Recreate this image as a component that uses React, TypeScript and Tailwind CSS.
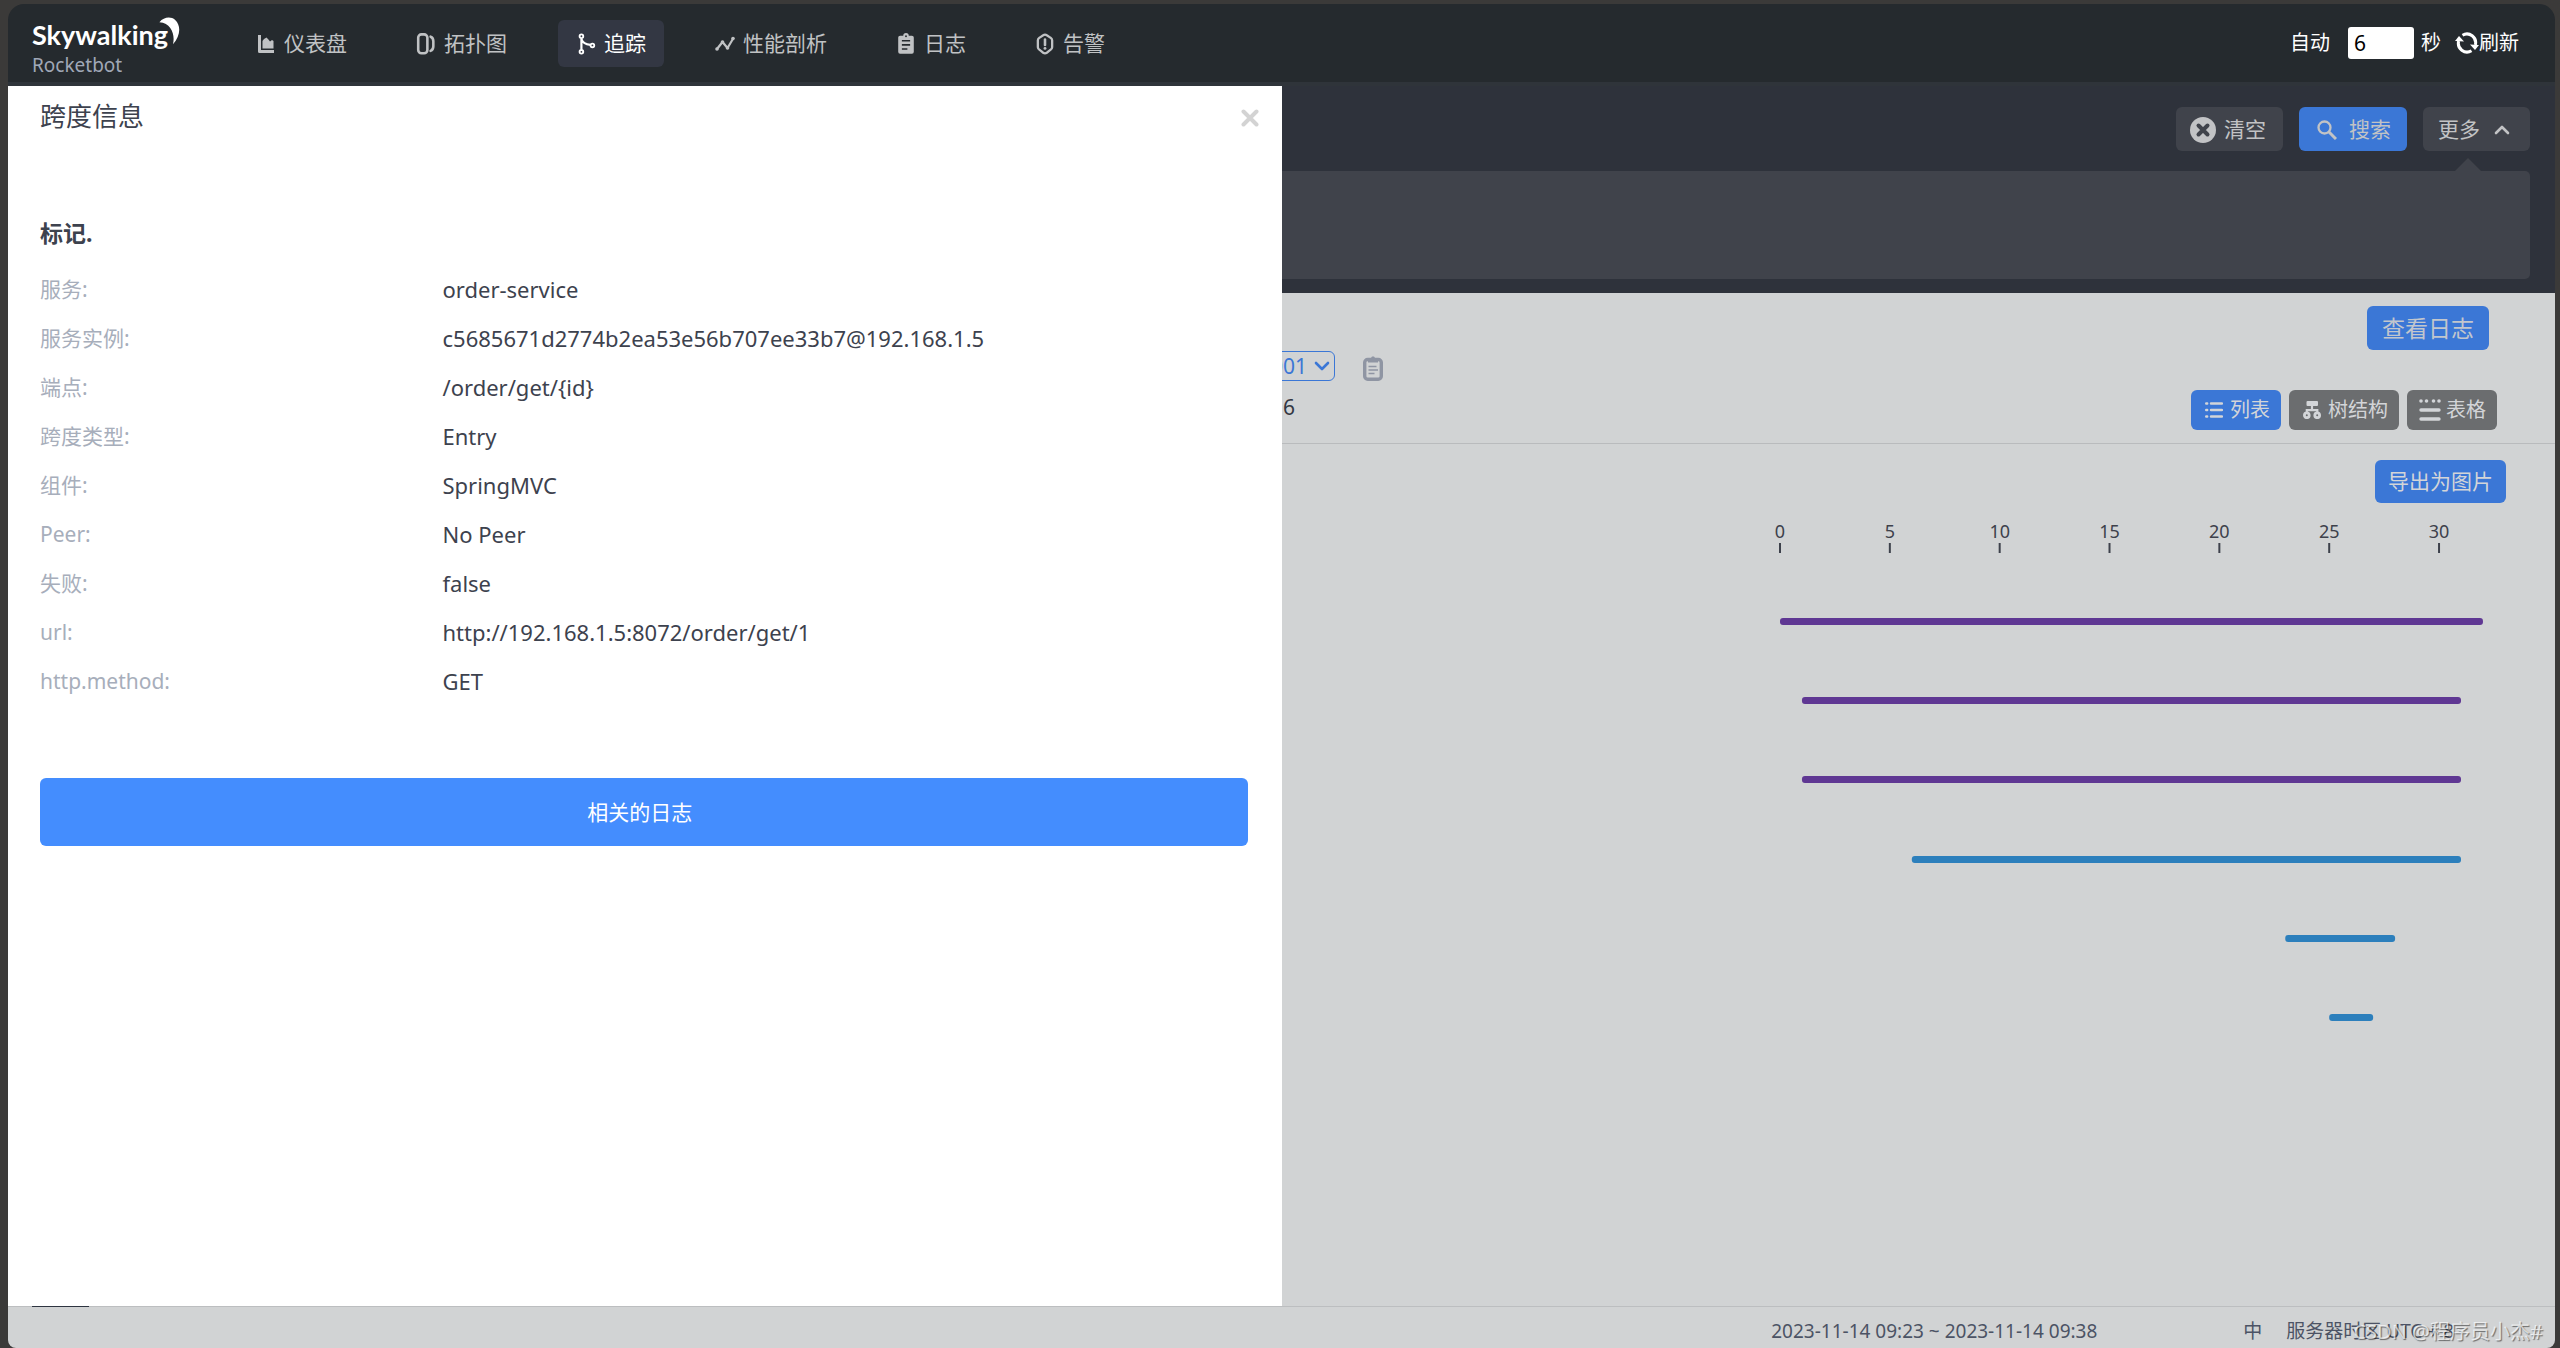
import type { ReactNode } from "react";

type IconProps = { className?: string };

const ChartIcon = ({ className }: IconProps) => (
  <svg viewBox="0 0 18 22" className={className} fill="currentColor" aria-hidden="true">
    <path d="M1 2h3v15h13v3H2.500Q1 20 1 18.500z" />
    <path d="M5.500 15.500V8l1.500-2 2.500-1.500L11 6l2 2.500 2-1.500 1.500 1v7.500z" />
  </svg>
);

const TopologyIcon = ({ className }: IconProps) => (
  <svg viewBox="0 0 20 24" className={className} fill="none" stroke="currentColor" aria-hidden="true">
    <rect x="1.500" y="1.500" width="10" height="20.500" rx="3.500" strokeWidth="2.800" />
    <path d="M15 4q3 1 3 5v5.500q0 4-3 5" strokeWidth="2.800" strokeLinecap="round" />
  </svg>
);

const TraceIcon = ({ className }: IconProps) => (
  <svg viewBox="0 0 20 24" className={className} fill="none" stroke="currentColor" strokeWidth="2" aria-hidden="true">
    <circle cx="5" cy="3.500" r="2" />
    <circle cx="5" cy="20.500" r="2" />
    <circle cx="17" cy="13.500" r="2" />
    <path d="M5 6v12M5 6.500q1.500 5.500 10 6.500" strokeWidth="2.400" />
  </svg>
);

const TrendIcon = ({ className }: IconProps) => (
  <svg viewBox="0 0 20 22" className={className} fill="none" stroke="currentColor" aria-hidden="true">
    <path d="M2 16 7.500 9l5 6 6-10" strokeWidth="2.200" strokeLinejoin="round" />
    <g fill="currentColor" stroke="none">
      <circle cx="2" cy="16" r="1.800" />
      <circle cx="7.500" cy="9" r="1.800" />
      <circle cx="12.500" cy="15" r="1.800" />
      <circle cx="18" cy="5.500" r="1.800" />
    </g>
  </svg>
);

const LogIcon = ({ className }: IconProps) => (
  <svg viewBox="0 0 20 24" className={className} aria-hidden="true">
    <path d="M3.500 3H7a3 3 0 0 1 6 0h3.500Q18.500 3 18.500 5v15.500q0 2-2 2h-13q-2 0-2-2V5q0-2 2-2z" fill="currentColor" />
    <path d="M5.500 8.500h9M5.500 13h9M5.500 17.500h6" stroke="#252a2e" strokeWidth="1.800" />
    <circle cx="10" cy="3.500" r="1" fill="#252a2e" />
  </svg>
);

const AlarmIcon = ({ className }: IconProps) => (
  <svg viewBox="0 0 20 24" className={className} fill="none" stroke="currentColor" aria-hidden="true">
    <path d="M10 1.800q1 0 2 .7l3.800 2.500q2 1.200 2 3v7.500q0 1.800-2 3L12 21.500q-2 1.300-4 0l-3.800-3q-2-1.200-2-3V8q0-1.800 2-3L8 2.500q1-.7 2-.7z" strokeWidth="2.500" />
    <path d="M10 7v6" strokeWidth="2.800" strokeLinecap="round" />
    <circle cx="10" cy="16.800" r="1.600" fill="currentColor" stroke="none" />
  </svg>
);

const RefreshIcon = ({ className }: IconProps) => (
  <svg viewBox="0 0 24 22" className={className} aria-hidden="true">
    <g fill="none" stroke="currentColor" strokeWidth="3">
      <path d="M7.500 3.200A8.700 8.700 0 0 1 20.300 13" />
      <path d="M16.500 18.800A8.700 8.700 0 0 1 3.700 9" />
    </g>
    <path d="M0 9 4 4l5 5.500z" fill="currentColor" />
    <path d="M24 13 20 18l-5-5.500z" fill="currentColor" />
  </svg>
);

const ClearIcon = ({ className }: IconProps) => (
  <svg viewBox="0 0 26 26" className={className} aria-hidden="true">
    <circle cx="13" cy="13" r="13" fill="currentColor" />
    <path d="M8.500 8.500l9 9M17.500 8.500l-9 9" stroke="#40434b" strokeWidth="4" strokeLinecap="round" />
  </svg>
);

const SearchIcon = ({ className }: IconProps) => (
  <svg viewBox="0 0 20 20" className={className} fill="none" stroke="currentColor" strokeWidth="2.300" aria-hidden="true">
    <circle cx="7.500" cy="7.500" r="6" />
    <path d="M12 12l7 7" strokeWidth="3" />
  </svg>
);

const Chevron = ({ className }: IconProps) => (
  <svg viewBox="0 0 16 10" className={className} fill="none" stroke="currentColor" strokeWidth="2.600" strokeLinecap="round" strokeLinejoin="round" aria-hidden="true">
    <path d="M2 2l6 6 6-6" />
  </svg>
);

const ClipboardIcon = ({ className }: IconProps) => (
  <svg viewBox="0 0 20 25" className={className} fill="none" stroke="currentColor" aria-hidden="true">
    <rect x="1.700" y="3.500" width="16.600" height="19.800" rx="3" strokeWidth="3.400" />
    <path d="M5 2h3l1-1.500h2L12 2h3v4.500H5z" fill="currentColor" stroke="none" />
    <path d="M5.500 10.500h8M5.500 14h9.500M5.500 17.500h6" strokeWidth="1.600" />
  </svg>
);

const ListIcon = ({ className }: IconProps) => (
  <svg viewBox="0 0 18 18" className={className} stroke="currentColor" strokeWidth="2.400" aria-hidden="true">
    <path d="M1.200 2.500h1M1.200 9h1M1.200 15.500h1M6 2.500h11M6 9h11M6 15.500h11" strokeLinecap="round" />
  </svg>
);

const TreeIcon = ({ className }: IconProps) => (
  <svg viewBox="0 0 18 18" className={className} fill="none" stroke="currentColor" strokeWidth="2.200" aria-hidden="true">
    <rect x="3.500" y="0" width="11.500" height="5" rx="1" fill="currentColor" stroke="none" />
    <path d="M9 4v5M3.800 13V9.200h10.500V13" />
    <circle cx="3.800" cy="14.300" r="2.400" strokeWidth="2.800" />
    <circle cx="14.200" cy="14.300" r="2.400" strokeWidth="2.800" />
  </svg>
);

const TableIcon = ({ className }: IconProps) => (
  <svg viewBox="0 0 22 22" className={className} aria-hidden="true">
    <path d="M2 11h18M2 20h18" stroke="currentColor" strokeWidth="3.400" strokeLinecap="round" />
    <g fill="currentColor">
      <circle cx="2" cy="2" r="1.800" />
      <circle cx="7.500" cy="2" r="1.800" />
      <circle cx="14.500" cy="2" r="1.800" />
      <circle cx="20" cy="2" r="1.800" />
    </g>
  </svg>
);

const navItems: { label: string; Icon: (p: IconProps) => ReactNode; active?: boolean }[] = [
  { label: "仪表盘", Icon: ChartIcon },
  { label: "拓扑图", Icon: TopologyIcon },
  { label: "追踪", Icon: TraceIcon, active: true },
  { label: "性能剖析", Icon: TrendIcon },
  { label: "日志", Icon: LogIcon },
  { label: "告警", Icon: AlarmIcon },
];

const spanFields = [
  ["服务:", "order-service"],
  ["服务实例:", "c5685671d2774b2ea53e56b707ee33b7@192.168.1.5"],
  ["端点:", "/order/get/{id}"],
  ["跨度类型:", "Entry"],
  ["组件:", "SpringMVC"],
  ["Peer:", "No Peer"],
  ["失败:", "false"],
  ["url:", "http://192.168.1.5:8072/order/get/1"],
  ["http.method:", "GET"],
];

const PURPLE = "#5f3793";
const BLUE = "#2c7fbc";
const MAX = 32;
const spans = [
  { start: 0, end: 32, y: 115, color: PURPLE },
  { start: 1, end: 31, y: 194, color: PURPLE },
  { start: 1, end: 31, y: 273, color: PURPLE },
  { start: 6, end: 31, y: 353, color: BLUE },
  { start: 23, end: 28, y: 432, color: BLUE },
  { start: 25, end: 27, y: 511, color: BLUE },
];
const ticks = [0, 5, 10, 15, 20, 25, 30];
const pct = (v: number) => `${(v / MAX) * 100}%`;

function Header() {
  return (
    <header className="flex h-[78px] items-center rounded-t-2xl bg-[#252a2e] pl-6 pr-9 text-white">
      <div className="flex w-[206px] flex-col pt-2">
        <div className="flex items-start">
          <span className="text-[27px] leading-9 font-bold font-['Lato',sans-serif]">Skywalking</span>
          <svg viewBox="0 0 23 32" className="-ml-2.5 h-7 w-[23px]" fill="#fff" aria-hidden="true">
            <path d="M0 6C5 0 13-1 18 3.500 25 10 24 22 15.500 31 18 21 14 7 0 6z" />
          </svg>
        </div>
        <span className="text-[19px] leading-6 text-[#a0a8b7]">Rocketbot</span>
      </div>
      <nav className="flex gap-[33px]">
        {navItems.map(({ label, Icon, active }) => (
          <a
            key={label}
            href="#"
            className={
              active
                ? "flex h-[47px] items-center gap-2 rounded-md bg-[#333743] px-[18px] pt-0.5 text-[21px] text-white"
                : "flex h-[47px] items-center gap-2 px-[18px] pt-0.5 text-[21px] text-[#c0c2c4]"
            }
          >
            <Icon className="h-[22px] w-5" />
            {label}
          </a>
        ))}
      </nav>
      <div className="ml-auto flex items-center text-[20px]">
        <label htmlFor="interval">自动</label>
        <input id="interval" defaultValue="6" className="ml-[18px] h-8 w-[66px] rounded-[3px] bg-white px-1.5 text-[21px] text-black" />
        <span className="ml-[7px]">秒</span>
        <button type="button" className="ml-3.5 flex items-center">
          <RefreshIcon className="h-[22px] w-6" />
          刷新
        </button>
      </div>
    </header>
  );
}

function SearchArea() {
  return (
    <section className="bg-[#2e323b] px-[25px] pt-[21px] pb-3.5 text-[21px] text-[#c2c3c5]">
      <div className="flex justify-end gap-4">
        <button type="button" className="flex h-11 w-[107px] items-center gap-2 rounded-md bg-[#40434b] pt-px pl-3.5">
          <ClearIcon className="size-[26px]" />
          清空
        </button>
        <button type="button" className="flex h-11 w-[108px] items-center gap-3 rounded-md bg-[#3b77d6] pt-px pl-[18px]">
          <SearchIcon className="size-5" />
          搜索
        </button>
        <button type="button" className="flex h-11 w-[107px] items-center gap-3.5 rounded-md bg-[#40434b] pt-px pl-[15px]">
          更多
          <Chevron className="h-2.5 w-4 rotate-180" />
        </button>
      </div>
      <div className="relative mt-5 h-[108px] rounded-[5px] bg-[#40434b]">
        <svg viewBox="0 0 26 13" className="absolute right-[49px] bottom-full h-[13px] w-[26px]" aria-hidden="true">
          <path d="M13 0l13 13H0z" fill="#40434b" />
        </svg>
      </div>
    </section>
  );
}

function TraceDetail() {
  return (
    <section className="flex-1 text-[21px]">
      <div className="flex h-[151px] justify-between border-b border-[#b9bbbd] pl-[49%]">
        <div className="pt-[58px]">
          <div className="flex items-center gap-7">
            <div className="relative">
              <select aria-label="Trace ID" className="h-[30px] w-[79px] appearance-none rounded-md border border-[#3b77d6] bg-transparent pl-3.5 text-[21px] leading-6 text-[#3b77d6]">
                <option>001</option>
              </select>
              <Chevron className="pointer-events-none absolute top-2.5 right-[5px] h-2.5 w-4 text-[#3b77d6]" />
            </div>
            <button type="button" aria-label="复制" className="pt-1">
              <ClipboardIcon className="h-[25px] w-5 text-[#8f95a3]" />
            </button>
          </div>
          <p className="ml-[27px] mt-2.5 leading-7 text-[#333743]">6</p>
        </div>
        <div className="flex flex-col items-end gap-10 pt-[13px] pr-[58px]">
          <button type="button" className="mr-2 h-11 rounded-md bg-[#3b77d6] px-[15px] text-[23px] text-[#c2c6cd]">查看日志</button>
          <div className="flex gap-2 text-[20px] text-[#d3d5d8]">
            <button type="button" className="flex h-10 w-[90px] items-center gap-[7px] rounded-md bg-[#3b77d6] pl-3.5">
              <ListIcon className="size-[18px]" />
              列表
            </button>
            <button type="button" className="flex h-10 w-[110px] items-center gap-[7px] rounded-md bg-[#6b6d6f] pl-3.5">
              <TreeIcon className="size-[18px]" />
              树结构
            </button>
            <button type="button" className="flex h-10 w-[90px] items-center gap-[5px] rounded-md bg-[#6b6d6f] pl-3">
              <TableIcon className="size-[22px]" />
              表格
            </button>
          </div>
        </div>
      </div>
      <div className="flex justify-end pt-4 pr-[49px]">
        <button type="button" className="h-[43px] rounded-md bg-[#3b77d6] px-[13px] text-[21px] text-[#d3d5d8]">导出为图片</button>
      </div>
      <svg className="mr-[72px] ml-auto h-[540px] w-[27.6%] overflow-visible" role="img" aria-label="Span timeline">
        {ticks.map((t) => (
          <g key={t}>
            <text x={pct(t)} y="35" textAnchor="middle" className="fill-[#3d414b] text-[18px]">{t}</text>
            <line x1={pct(t)} x2={pct(t)} y1="40" y2="50" stroke="#3d414b" strokeWidth="2" />
          </g>
        ))}
        {spans.map((s) => (
          <rect key={s.y} x={pct(s.start)} y={s.y} width={pct(s.end - s.start)} height="7" rx="3" fill={s.color} />
        ))}
      </svg>
    </section>
  );
}

function SpanDrawer() {
  return (
    <aside role="dialog" aria-labelledby="span-title" className="absolute inset-y-0 left-0 w-1/2 bg-white pr-[34px] pl-8 text-[21px] text-[#3d424e]">
      <div className="flex h-[60px] items-center justify-between">
        <h2 id="span-title" className="text-[26px]">跨度信息</h2>
        <button type="button" aria-label="关闭" className="-mr-3.5 p-[3px] pt-1.5 text-[#d3d3d3]">
          <svg viewBox="0 0 18 18" className="size-[18px]" fill="none" stroke="currentColor" strokeWidth="4" strokeLinecap="round" aria-hidden="true">
            <path d="M2.500 2.500l13 13M15.500 2.500l-13 13" />
          </svg>
        </button>
      </div>
      <h3 className="mt-[71px] text-[23px] leading-8 font-bold">标记.</h3>
      <dl className="mt-4">
        {spanFields.map(([k, v]) => (
          <div key={k} className="grid h-[49px] grid-cols-3 items-center">
            <dt className="text-[#a7aebb]">{k}</dt>
            <dd className="col-span-2 text-[22px]">{v}</dd>
          </div>
        ))}
      </dl>
      <button type="button" className="mt-[72px] h-[68px] w-full rounded-md bg-[#448dfe] pt-0.5 pr-2 text-white">相关的日志</button>
    </aside>
  );
}

export default function App() {
  return (
    <div className="flex min-h-screen flex-col bg-[#3b3a39] pt-1 pr-[5px] pl-2 font-['Noto_Sans','Noto_Sans_CJK_SC',sans-serif]">
      <Header />
      <div className="h-1 bg-[#2f343a]" />
      <main className="relative flex flex-1 flex-col bg-[#d1d3d4]">
        <SearchArea />
        <TraceDetail />
        <SpanDrawer />
      </main>
      <footer className="rounded-b-lg bg-[#d1d3d4] text-[19px] text-[#4c5365]">
        <div className="h-px bg-[#bcbec0]">
          <div className="ml-6 h-px w-[57px] bg-[#2e3541]" />
        </div>
        <div className="relative flex h-[41px] items-center justify-end pt-2 pr-[101px]">
          <span>2023-11-14 09:23 ~ 2023-11-14 09:38</span>
          <span className="ml-[146px]">中</span>
          <span className="ml-6">服务器时区 UTC + 8</span>
          <span className="absolute right-3 text-[20px] text-white/70 [text-shadow:1px_1px_1px_rgba(0,0,0,0.5)]">CSDN @程序员小杰#</span>
        </div>
      </footer>
    </div>
  );
}
